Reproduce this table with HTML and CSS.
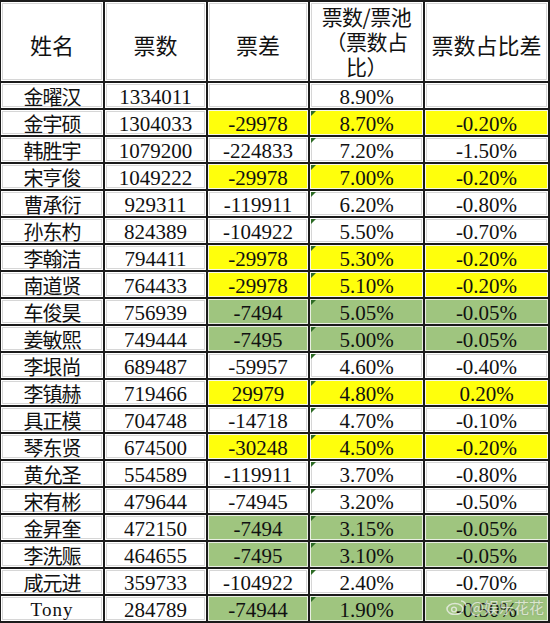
FILE: index.html
```html
<!DOCTYPE html>
<html lang="zh">
<head>
    <meta charset="UTF-8">
    <meta name="viewport" content="width=device-width, initial-scale=1.0">
    <title>票数统计</title>
    <link rel="stylesheet" href="styles.css">
</head>
<body>
    <table class="sheet">
        <colgroup>
            <col class="c-name">
            <col class="c-votes">
            <col class="c-diff">
            <col class="c-share">
            <col class="c-delta">
        </colgroup>
        <thead>
            <tr>
                <th>姓名</th>
                <th>票数</th>
                <th>票差</th>
                <th class="wrap"><span>票数/票池</span><span>（票数占</span><span>比）</span></th>
                <th>票数占比差</th>
            </tr>
        </thead>
        <tbody>
            <tr><td class="name">金曜汉</td><td>1334011</td><td></td><td class="pct first">8.90%</td><td></td></tr>
            <tr><td class="name">金宇硕</td><td>1304033</td><td class="y">-29978</td><td class="pct y">8.70%</td><td class="y">-0.20%</td></tr>
            <tr><td class="name">韩胜宇</td><td>1079200</td><td>-224833</td><td class="pct">7.20%</td><td>-1.50%</td></tr>
            <tr><td class="name">宋亨俊</td><td>1049222</td><td class="y">-29978</td><td class="pct y">7.00%</td><td class="y">-0.20%</td></tr>
            <tr><td class="name">曹承衍</td><td>929311</td><td>-119911</td><td class="pct">6.20%</td><td>-0.80%</td></tr>
            <tr><td class="name">孙东杓</td><td>824389</td><td>-104922</td><td class="pct">5.50%</td><td>-0.70%</td></tr>
            <tr><td class="name">李翰洁</td><td>794411</td><td class="y">-29978</td><td class="pct y">5.30%</td><td class="y">-0.20%</td></tr>
            <tr><td class="name">南道贤</td><td>764433</td><td class="y">-29978</td><td class="pct y">5.10%</td><td class="y">-0.20%</td></tr>
            <tr><td class="name">车俊昊</td><td>756939</td><td class="g">-7494</td><td class="pct g">5.05%</td><td class="g">-0.05%</td></tr>
            <tr><td class="name">姜敏熙</td><td>749444</td><td class="g">-7495</td><td class="pct g">5.00%</td><td class="g">-0.05%</td></tr>
            <tr><td class="name">李垠尚</td><td>689487</td><td>-59957</td><td class="pct">4.60%</td><td>-0.40%</td></tr>
            <tr><td class="name">李镇赫</td><td>719466</td><td class="y">29979</td><td class="pct y">4.80%</td><td class="y">0.20%</td></tr>
            <tr><td class="name">具正模</td><td>704748</td><td>-14718</td><td class="pct">4.70%</td><td>-0.10%</td></tr>
            <tr><td class="name">琴东贤</td><td>674500</td><td class="y">-30248</td><td class="pct y">4.50%</td><td class="y">-0.20%</td></tr>
            <tr><td class="name">黄允圣</td><td>554589</td><td>-119911</td><td class="pct">3.70%</td><td>-0.80%</td></tr>
            <tr><td class="name">宋有彬</td><td>479644</td><td>-74945</td><td class="pct">3.20%</td><td>-0.50%</td></tr>
            <tr><td class="name">金昇奎</td><td>472150</td><td class="g">-7494</td><td class="pct g">3.15%</td><td class="g">-0.05%</td></tr>
            <tr><td class="name">李洗赈</td><td>464655</td><td class="g">-7495</td><td class="pct g">3.10%</td><td class="g">-0.05%</td></tr>
            <tr><td class="name">咸元进</td><td>359733</td><td>-104922</td><td class="pct">2.40%</td><td>-0.70%</td></tr>
            <tr><td class="name latin">Tony</td><td>284789</td><td class="g">-74944</td><td class="pct g">1.90%</td><td class="g mark">-0.50%
                <span class="watermark">
                    <svg width="22" height="16" viewBox="0 0 22 16">
                        <ellipse cx="9" cy="10" rx="8" ry="5.5" fill="none" stroke="#f2f2f2" stroke-width="1.6"/>
                        <circle cx="8" cy="10.5" r="2.4" fill="none" stroke="#f2f2f2" stroke-width="1.4"/>
                        <path d="M15 2 a5 5 0 0 1 5 5" fill="none" stroke="#f2f2f2" stroke-width="1.4"/>
                    </svg>
                    <span class="wm-text">@娱乐花花</span>
                </span>
            </td></tr>
        </tbody>
    </table>
</body>
</html>
```

FILE: styles.css
```css
* {
    margin: 0;
    padding: 0;
    box-sizing: border-box;
}

body {
    background: #fff;
    width: 550px;
    height: 623px;
    overflow: hidden;
}

.sheet {
    border-collapse: collapse;
    table-layout: fixed;
    width: 549px;
    margin-left: -1px;
    font-family: "Liberation Serif", "Noto Sans CJK SC", serif;
    color: #111;
}

.c-name { width: 104px; }
.c-votes { width: 103px; }
.c-diff { width: 102px; }
.c-share { width: 115px; }
.c-delta { width: 125px; }

th,
td {
    border: 2px solid #1b1b1b;
    text-align: center;
    background: #fff;
    box-shadow: inset 0 0 0 1px #fff, inset 0 0 0 2px #d6d6d6;
    white-space: nowrap;
}

th {
    height: 81px;
    font-family: "Noto Sans CJK SC", sans-serif;
    font-weight: 400;
    font-size: 22px;
    line-height: 24px;
    padding-top: 4px;
}

th.wrap {
    vertical-align: top;
    padding-top: 2px;
    font-size: 21px;
    letter-spacing: -0.5px;
}

th.wrap span {
    display: block;
    height: 25px;
    line-height: 25px;
}

td {
    height: 27px;
    font-size: 21px;
    line-height: 22px;
    padding-top: 3px;
}

td.name {
    font-family: "Noto Sans CJK SC", sans-serif;
    font-size: 20px;
    line-height: 20px;
    padding-top: 2px;
    letter-spacing: -1px;
}

td.latin {
    font-family: "Liberation Serif", serif;
    font-size: 19px;
    letter-spacing: 1px;
}

td.y {
    background: #ffff0c;
    box-shadow: inset 0 0 0 1px #f6f6e8;
}

td.g {
    background: #9fc57f;
    box-shadow: inset 0 0 0 1px #e8eee2;
}

td.pct {
    position: relative;
}

/* excel error marker in the corner */
td.pct::before {
    content: "";
    position: absolute;
    left: 1px;
    top: 1px;
    border-top: 5px solid #2d6b25;
    border-right: 5px solid transparent;
}

td.pct.first::before {
    display: none;
}

td.mark {
    position: relative;
}

.watermark {
    position: absolute;
    right: 4px;
    top: 0;
    display: flex;
    align-items: center;
    gap: 2px;
    opacity: 0.75;
}

.wm-text {
    font-family: "Noto Sans CJK SC", sans-serif;
    font-size: 15px;
    color: #eef0ea;
    text-shadow: 0 0 2px #7a8a70;
}
```
